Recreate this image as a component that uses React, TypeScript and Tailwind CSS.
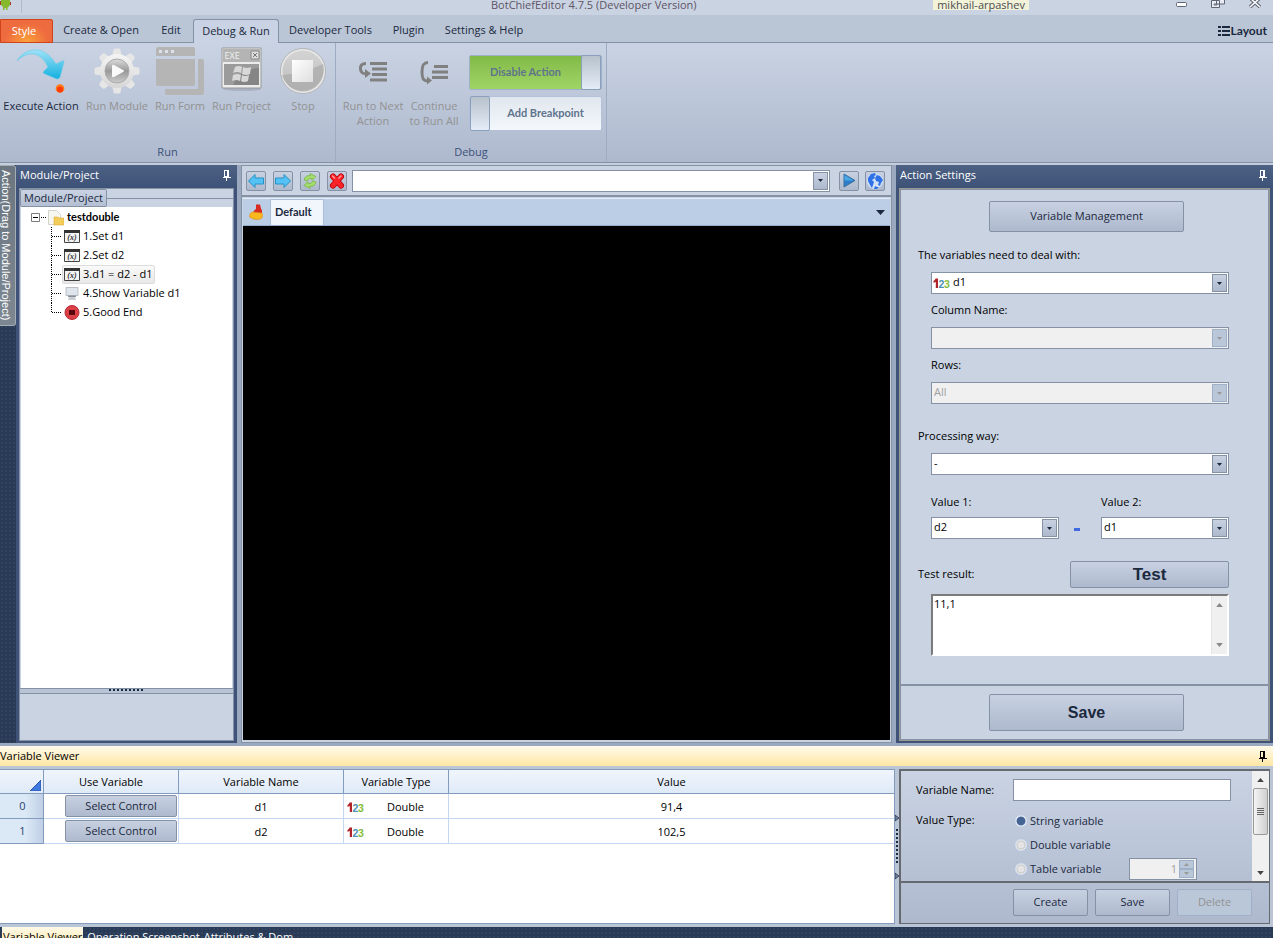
import type { ReactNode } from "react";

const raised =
  "rounded-[2px] border border-[#8591a5] bg-gradient-to-b from-[#c7d1e1] to-[#aeb9ce] text-[#1b293e]";

function Pin() {
  return (
    <svg width="9" height="11" viewBox="0 0 9 11" fill="none" stroke="currentColor" shapeRendering="crispEdges">
      <path d="M2.5 0.5h4v6h-4zM5.5 0.5v6M0.5 7h8M4.5 7v4" />
    </svg>
  );
}

function Arrow({ up = false, wide = false }: { up?: boolean; wide?: boolean }) {
  return (
    <svg width={wide ? 7 : 5} height={wide ? 4 : 3} viewBox="0 0 5 3" fill="currentColor">
      <path d={up ? "M0 3h5L2.5 0z" : "M0 0h5L2.5 3z"} />
    </svg>
  );
}

function Numbers() {
  return (
    <svg width="17" height="12" viewBox="0 0 17 12" fontFamily="Liberation Sans, sans-serif" fontWeight="bold">
      <path d="M2.600 1.500H5V11H2.800V4.800Q1.800 5.600.5 5.800V4Q2 3.400 2.600 1.500z" fill="#b02328" />
      <text x="5.500" y="11" fontSize="10.500" fill="#4d8fb5">2</text>
      <text x="11" y="11" fontSize="10.500" fill="#86bb3c">3</text>
    </svg>
  );
}

function Combo({
  id,
  value,
  disabled = false,
  icon,
  label,
}: {
  id: string;
  value: string;
  disabled?: boolean;
  icon?: ReactNode;
  label?: string;
}) {
  return (
    <div className="relative w-full">
      <select
        id={id}
        aria-label={label}
        disabled={disabled}
        defaultValue={value}
        className={`block h-[22px] w-full appearance-none border border-[#8591a5] pb-[2px] text-[11px] leading-4 outline-none ${
          icon ? "pl-[21px]" : "pl-[2px]"
        } ${disabled ? "bg-[#f0f0f0] text-[#a0a0a0] opacity-100" : "bg-white text-black"}`}
      >
        <option value={value}>{value}</option>
      </select>
      {icon && <span className="pointer-events-none absolute top-[5px] left-[2px]">{icon}</span>}
      <span
        className={`pointer-events-none absolute top-[2px] right-[2px] flex h-[18px] w-[15px] items-center justify-center border ${
          disabled
            ? "border-[#9fb0c9] bg-[#bac7d8] text-[#999]"
            : "border-[#8591a5] bg-gradient-to-b from-[#c7d1e1] to-[#aeb9ce] text-[#1b293e]"
        }`}
      >
        <Arrow />
      </span>
    </div>
  );
}

function ExecuteIcon() {
  return (
    <svg width="48" height="46" viewBox="0 0 48 46">
      <defs>
        <linearGradient id="ex" x1="0" y1="0" x2="0" y2="1">
          <stop offset="0" stopColor="#9fe2f7" />
          <stop offset="1" stopColor="#12b0e0" />
        </linearGradient>
      </defs>
      <path
        d="M0 13C5 4 14 1 22 2c8 2 13 8 17 14l6-3q2-1 2 1l-4 15q-1 2-3 2l-12-5q-3-1-1-3l4-4C27 10 20 5 13 6 8 6.500 4 9 0 13z"
        fill="url(#ex)"
        stroke="#5cc8e8"
        strokeWidth="0.500"
      />
      <circle cx="43" cy="40.500" r="4.300" fill="#ff7a1a" />
      <circle cx="43" cy="41.500" r="3" fill="#ff3c0a" />
    </svg>
  );
}

function GearIcon() {
  const teeth = [0, 45, 90, 135, 180, 225, 270, 315];
  return (
    <svg width="46" height="46" viewBox="0 0 46 46">
      <defs>
        <linearGradient id="ge" x1="0" y1="0" x2="0" y2="1">
          <stop offset="0" stopColor="#f4f4f4" />
          <stop offset="1" stopColor="#d6d6d6" />
        </linearGradient>
        <linearGradient id="gi" x1="0" y1="0" x2="0" y2="1">
          <stop offset="0" stopColor="#ddd" />
          <stop offset="0.500" stopColor="#999" />
          <stop offset="1" stopColor="#ccc" />
        </linearGradient>
      </defs>
      {teeth.map((a) => (
        <path key={a} d="M18 10L19.500 1.500Q20 .5 21 .5h4q1 0 1.500 1L28 10z" fill="#e6e6e6" transform={`rotate(${a} 23 23)`} />
      ))}
      <circle cx="23" cy="23" r="17" fill="url(#ge)" />
      <circle cx="23" cy="23" r="12" fill="url(#gi)" stroke="#aaa" />
      <path d="M18 18q0-2 2-1l9 5q2 1 0 2l-9 5q-2 1-2-1z" fill="#fafafa" />
    </svg>
  );
}

function FormIcon() {
  return (
    <svg width="48" height="48" viewBox="0 0 48 48" fill="#b5b5b5">
      <path d="M2 0h35q2 0 2 2v7H0V2q0-2 2-2z" />
      <path d="M0 12h39v25q0 2-2 2H2q-2 0-2-2z" />
      <path d="M42 12h4q2 0 2 2v32q0 2-2 2H11q-2 0-2-2v-4h33z" />
      <path d="M3 3h3v3H3zM9 3h3v3H9zM15 3h3v3h-3z" fill="#dde2ea" />
    </svg>
  );
}

function ProjectIcon() {
  return (
    <svg width="42" height="48" viewBox="0 0 42 48">
      <ellipse cx="21" cy="42" rx="19" ry="2" fill="#9ba3b3" opacity="0.600" />
      <path d="M1 1h39v40H1z" fill="#ececec" stroke="#999" />
      <path d="M2 2h37v13H2z" fill="#b4b4b4" />
      <path d="M3 17h35v21H3z" fill="#858585" />
      <path d="M3 17h35v4Q20 22 12 38H3z" fill="#9b9b9b" />
      <text x="3.500" y="12" fontSize="9" fill="#f0f0f0" fontFamily="Open Sans, sans-serif">EXE</text>
      <path d="M30 4h8v8h-8z" fill="#ddd" stroke="#888" />
      <path d="M32 6l4 4M36 6l-4 4" stroke="#777" />
      <g fill="#d8d8d8">
        <path d="M14 20q4-2 7 0l-1 6q-4-2-8 0z" />
        <path d="M22 20q4 2 8 0l-1 7q-4 2-8 0z" />
        <path d="M12 28q4-2 8 0l-1 6q-4-2-8 0z" />
        <path d="M21 28q3 2 7 0l-1 6q-4 2-7 0z" />
      </g>
    </svg>
  );
}

function StopIcon() {
  return (
    <svg width="48" height="48" viewBox="0 0 48 48">
      <defs>
        <linearGradient id="st" x1="0" y1="0" x2="0" y2="1">
          <stop offset="0" stopColor="#d4d4d4" />
          <stop offset="1" stopColor="#bdbdbd" />
        </linearGradient>
        <linearGradient id="sq" x1="0" y1="0" x2="1" y2="1">
          <stop offset="0" stopColor="#fff" />
          <stop offset="1" stopColor="#dedede" />
        </linearGradient>
      </defs>
      <circle cx="24" cy="24" r="21.500" fill="url(#st)" stroke="#e9e9e9" strokeWidth="2" />
      <circle cx="24" cy="24" r="22.500" fill="none" stroke="#aaa" strokeWidth="0.800" />
      <path d="M3 28Q24 27 44 17A21 21 0 0 1 3 28z" fill="#a9a9a9" opacity="0.700" />
      <path d="M13 13h21v22H13z" fill="url(#sq)" />
    </svg>
  );
}

function NextIcon({ over = false }: { over?: boolean }) {
  return (
    <svg width="28" height="28" viewBox="0 -4 28 28" fill="none" stroke="#808080">
      {over ? (
        <>
          <path d="M8 1.500C3 1.500 2 5 2 11s1 9 6 9" strokeWidth="3" />
          <path d="M7 15.500v8l5-4z" fill="#808080" stroke="none" />
          <path d="M14 5.500h14M12 11h16M12 16.500h16" strokeWidth="3" />
        </>
      ) : (
        <>
          <path d="M7 2.500Q1 2.500 1.500 8T8 12.500" strokeWidth="3" />
          <path d="M6 8v9l6-4.500z" fill="#808080" stroke="none" />
          <path d="M11 2.500h17M13 8h15M13 13.500h15M11 19h17" strokeWidth="3" />
        </>
      )}
    </svg>
  );
}

function RibbonButton({
  width,
  label,
  disabled = true,
  children,
}: {
  width: string;
  label: string;
  disabled?: boolean;
  children: ReactNode;
}) {
  return (
    <button
      disabled={disabled}
      className={`flex flex-col items-center gap-[2px] text-center leading-[15px] ${width} ${
        disabled ? "text-[#929292]" : "text-[#1b293e]"
      }`}
    >
      <span className="flex h-[50px] items-center">{children}</span>
      <span className="whitespace-pre">{label}</span>
    </button>
  );
}

function VariableIcon() {
  return (
    <svg width="16" height="13" viewBox="0 0 16 13">
      <path d="M.5.5h15v12H.5z" fill="#f4f4f4" stroke="#444" />
      <path d="M0 0h16v3H0z" fill="#333" />
      <text x="8" y="10" fontSize="8" textAnchor="middle" fontStyle="italic" fontWeight="bold" fontFamily="Liberation Serif, serif" fill="#333">(x)</text>
    </svg>
  );
}

function MonitorIcon() {
  return (
    <svg width="16" height="13" viewBox="0 0 16 13">
      <path d="M2 .5h12v8H2z" fill="#dfe5ec" stroke="#b9bec5" />
      <path d="M4 8.500h8v1.500H4z" fill="#8d9299" />
      <path d="M5 10h6l1 3H4z" fill="#c9ccd0" />
    </svg>
  );
}

function EndIcon() {
  return (
    <svg width="16" height="15" viewBox="0 0 16 15">
      <circle cx="8" cy="7.500" r="7" fill="#dc3f48" stroke="#b52a34" />
      <path d="M5 5h6v5H5z" fill="#5a060b" />
    </svg>
  );
}

const steps = [
  { text: "1.Set d1", icon: <VariableIcon /> },
  { text: "2.Set d2", icon: <VariableIcon /> },
  { text: "3.d1 = d2 - d1", icon: <VariableIcon />, selected: true },
  { text: "4.Show Variable d1", icon: <MonitorIcon /> },
  { text: "5.Good End", icon: <EndIcon /> },
];

const rows = [
  { name: "d1", type: "Double", value: "91,4" },
  { name: "d2", type: "Double", value: "102,5" },
];

const tabs = [
  { text: "Create & Open", width: "w-[96px]" },
  { text: "Edit", width: "w-[44px]" },
  { text: "Debug & Run", width: "w-[86px]", active: true },
  { text: "Developer Tools", width: "w-[103px]" },
  { text: "Plugin", width: "w-[53px]" },
  { text: "Settings & Help", width: "w-[98px]" },
];

const darkDots =
  "bg-[#293a56] bg-[radial-gradient(#32435f_1px,transparent_1px)] bg-[length:4px_4px]";

const strong = "font-['Lato','Open_Sans',sans-serif] font-bold";

function TitleBar() {
  return (
    <header className="flex h-[15px] shrink-0 items-start bg-[#c9d3e2] text-[#5f5366]">
      <div className="w-[491px]">
        <svg width="22" height="13" viewBox="0 0 22 13">
          <path d="M1 0h9v5l-1.500 2-1 .5V10H6V8H4.500v2H3V7L1 5z" fill="#85b82c" />
          <path d="M0 1h1v4H0zM10 2h1v3h-1z" fill="#a63a26" />
          <path d="M21.500 0v13" stroke="#b0bccd" />
        </svg>
      </div>
      <h1 className="leading-[10px] whitespace-nowrap">BotChiefEditor 4.7.5 (Developer Version)</h1>
      <div className="ml-auto flex items-start gap-[24px] pr-[12px]">
        <span className="mr-[123px] h-[10px] bg-[#f3f3da] px-[4px] leading-[10px] text-[#4b4b50]">mikhail-arpashev</span>
        <button aria-label="Minimize">
          <svg width="11" height="8" viewBox="0 0 11 8"><rect x="0.500" y="2.500" width="10" height="4" rx="1" fill="#fff" stroke="#5e6576" /></svg>
        </button>
        <button aria-label="Restore">
          <svg width="14" height="8" viewBox="0 0 14 8" fill="#e9edf3" stroke="#5e6576"><path d="M5.500-2h8v6h-8zM.5.5h8v7h-8zM3 4h3v1H3z" /></svg>
        </button>
        <button aria-label="Close">
          <svg width="12" height="8" viewBox="0 0 12 8" fill="none"><path d="M1-2l10 9M11-2L1 7" stroke="#5e6576" strokeWidth="3.500" /><path d="M1-2l10 9M11-2L1 7" stroke="#fff" strokeWidth="1.500" /></svg>
        </button>
      </div>
    </header>
  );
}

function Ribbon() {
  return (
    <>
      <nav className="flex h-[28px] shrink-0 items-end bg-[#bac6d6] text-[#1b293e] shadow-[inset_0_-1px_#8591a5]">
        <button className="h-[24px] w-[53px] rounded-tr-[2px] border border-[#d04218] bg-[radial-gradient(ellipse_at_bottom,#fba23a,#ee6b3f_60%)] pr-[5px] text-white">Style</button>
        {tabs.map((t) => (
          <button
            key={t.text}
            className={`h-[24px] pb-px whitespace-nowrap ${t.width} ${
              t.active ? "rounded-t-[3px] border border-b-0 border-[#8591a5] bg-[#c9d3e3]" : ""
            }`}
          >
            {t.text}
          </button>
        ))}
        <button className={`mr-[6px] ml-auto flex h-[24px] items-center gap-[1px] text-[12px] ${strong}`}>
          <svg width="12" height="10" viewBox="0 0 12 10" fill="currentColor"><path d="M0 0h3v2H0zM4 0h8v2H4zM0 4h3v2H0zM4 4h8v2H4zM0 8h3v2H0zM4 8h8v2H4z" /></svg>
          Layout
        </button>
      </nav>
      <div className="flex h-[120px] shrink-0 border-b border-[#8591a5] bg-gradient-to-b from-[#c9d3e3] to-[#aeb9ce]">
        <section className="flex w-[336px] flex-col justify-between border-r border-[#9dabc3] pt-[3px] pb-[2px]">
          <div className="flex items-start">
            <RibbonButton width="w-[82px]" label="Execute Action" disabled={false}><ExecuteIcon /></RibbonButton>
            <RibbonButton width="w-[70px]" label="Run Module"><GearIcon /></RibbonButton>
            <RibbonButton width="w-[56px]" label="Run Form"><FormIcon /></RibbonButton>
            <RibbonButton width="w-[67px]" label="Run Project"><ProjectIcon /></RibbonButton>
            <RibbonButton width="w-[56px]" label="Stop"><StopIcon /></RibbonButton>
          </div>
          <h2 className="text-center leading-4 text-[#3b5179]">Run</h2>
        </section>
        <section className="flex w-[271px] flex-col justify-between border-r border-[#9dabc3] pt-[3px] pb-[2px]">
          <div className="flex items-start pl-[6px]">
            <RibbonButton width="w-[62px]" label={"Run to Next\nAction"}><NextIcon /></RibbonButton>
            <RibbonButton width="w-[60px]" label={"Continue\nto Run All"}><NextIcon over /></RibbonButton>
            <div className={`flex flex-col gap-[6px] pt-[9px] pl-[5px] text-[#5f738c] ${strong}`}>
              <button role="switch" aria-checked="true" className="flex h-[35px] w-[133px] items-center rounded-[2px] border border-[#9fb0c9] bg-gradient-to-b from-[#82ba48] to-[#9fd565]">
                <span className="flex-1">Disable Action</span>
                <span className="h-[35px] w-[20px] rounded-[2px] border border-[#8ba0bd] bg-gradient-to-b from-[#b8c2cd] to-[#e3ecf7]" />
              </button>
              <button role="switch" aria-checked="false" className="flex h-[35px] w-[133px] items-center rounded-[2px] border border-[#b3c2d8] bg-gradient-to-b from-[#e1e7ee] to-[#f4f8fd]">
                <span className="h-[35px] w-[20px] rounded-[2px] border border-[#8ba0bd] bg-gradient-to-b from-[#b8c2cd] to-[#e3ecf7]" />
                <span className="flex-1">Add Breakpoint</span>
              </button>
            </div>
          </div>
          <h2 className="text-center leading-4 text-[#3b5179]">Debug</h2>
        </section>
      </div>
    </>
  );
}

function ProjectPanel() {
  return (
    <aside className="flex w-[221px] shrink-0 flex-col bg-[#3f5378] px-[3px] pb-[2px]">
      <h2 className="-mx-[3px] flex h-[23px] shrink-0 items-center justify-between bg-gradient-to-b from-[#4d6184] to-[#3d5277] pr-[6px] pb-[2px] pl-[4px] text-white">
        Module/Project <Pin />
      </h2>
      <div className="flex min-h-0 flex-1 flex-col border border-[#8591a5] bg-[#c9d3e2]">
        <div className="flex h-[18px] items-center">
          <button className="h-[18px] rounded-[2px] border border-[#8591a5] bg-gradient-to-b from-[#c9d3e3] to-[#b4bfd3] px-[3px] pb-px text-[#1b293e]">Module/Project</button>
          <span className="h-px flex-1 bg-[#8591a5]" />
        </div>
        <div className="mx-px min-h-0 flex-1 bg-white pt-[1px] text-black">
          <div className={`flex h-[19px] items-center pl-[10px] text-[11px] ${strong}`}>
            <svg width="33" height="17" viewBox="0 0 33 17">
              <path d="M.5 4.500h8v8h-8z" fill="#fff" stroke="#7b7b7b" />
              <path d="M2 8.500h5" stroke="#000" />
              <path d="M10 8.500h5" stroke="#000" strokeDasharray="1 1" />
              <path d="M17.500 1.500h8l4 4v10h-12z" fill="#f7f7f2" stroke="#d4d4cc" />
              <path d="M23 8h4l1 1h5v7H23z" fill="#f2cd5b" stroke="#dcae35" strokeWidth="0.600" />
            </svg>
            <span className="pl-[3px]">testdouble</span>
          </div>
          <ul>
            {steps.map((s, i) => (
              <li key={s.text} className="flex h-[19px] items-center pl-[30px]">
                <svg width="11" height="19" viewBox="0 0 11 19" fill="none" stroke="#000" strokeDasharray="1 1">
                  <path d={i === steps.length - 1 ? "M.5 0v9" : "M.5 0v19"} />
                  <path d="M1 9.500h9" />
                </svg>
                <span
                  className={`flex h-[19px] items-center gap-[3px] border pr-[1px] pl-[1px] ${
                    s.selected ? "rounded-[2px] border-[#dcdcdc] bg-gradient-to-b from-[#fafafa] to-[#e8e8e8]" : "border-transparent"
                  }`}
                >
                  {s.icon}
                  {s.text}
                </span>
              </li>
            ))}
          </ul>
        </div>
        <div className="flex h-[5px] justify-center border-t border-[#8591a5] bg-[#b8c3d5]">
          <svg width="35" height="2" viewBox="0 0 35 2"><path d="M0 1h35" stroke="#1b293e" strokeWidth="2" strokeDasharray="2 2" /></svg>
        </div>
        <div className="h-[47px] border-t border-[#8591a5]" />
      </div>
    </aside>
  );
}

function ToolButton({ label, children }: { label: string; children: ReactNode }) {
  return (
    <button aria-label={label} className={`flex size-[20px] shrink-0 items-center justify-center ${raised}`}>
      <svg width="18" height="18" viewBox="0 0 18 18">{children}</svg>
    </button>
  );
}

function Browser() {
  return (
    <main className="flex min-w-0 flex-1 flex-col border border-[#8591a5] bg-[#c9d3e2]">
      <div className="flex h-[31px] shrink-0 items-center border-b-2 border-[#8591a5] pr-[6px] pl-[4px]">
        <div className="flex gap-[7px] pr-[5px]">
          <ToolButton label="Back"><path d="M1.500 9L8 2.500V6h8.500v6H8v3.500z" fill="#55c2f5" stroke="#2690c4" /></ToolButton>
          <ToolButton label="Forward"><path d="M16.500 9L10 2.500V6H1.500v6H10v3.500z" fill="#55c2f5" stroke="#2690c4" /></ToolButton>
          <ToolButton label="Refresh">
            <path d="M3 8q1-5 6.500-4.500L9 1.500l6 3-4 4V6.500Q7 6 6 9zM15 10q-1 5-6.500 4.500l.5 2-6-3 4-4v2q4 .5 5-2.500z" fill="#a3db6d" stroke="#71b53a" strokeWidth="0.700" />
          </ToolButton>
          <ToolButton label="Stop loading">
            <path d="M5 4.500l8 9M13 4.500l-8 9" stroke="#b80008" strokeWidth="6" strokeLinecap="round" />
            <path d="M5 4.500l8 9M13 4.500l-8 9" stroke="#fb2329" strokeWidth="4.500" strokeLinecap="round" />
            <path d="M4.500 4l2 2M13 4l-2 2" stroke="#ff9b9b" strokeWidth="1.500" strokeLinecap="round" />
          </ToolButton>
        </div>
        <Combo id="address" value="" label="Address" />
        <div className="flex gap-[6px] pl-[9px]">
          <ToolButton label="Go">
            <path d="M4 2l11 6.500L4 15z" fill="#2c7ec8" stroke="#3f6f9c" />
            <path d="M4.500 3l9 5.500H4.500z" fill="#49a8e8" />
          </ToolButton>
          <ToolButton label="Open in browser">
            <circle cx="9" cy="9" r="8" fill="#d2e1f7" />
            <path d="M2 6l3-4 4-1 1 2-2 1 1 2-3 2 2 2-1 3-1 3-2-3-2-4zM11 3l3 1 3 4-2 3-1 3-2-1 1-3-3-1-1-3zM9 14l2 1 2 0-2 2H8z" fill="#2f72e8" />
          </ToolButton>
        </div>
      </div>
      <div className="flex min-h-0 flex-1 flex-col px-px pt-px pb-[2px]">
        <div className="flex h-[28px] shrink-0 items-end border-t border-b border-t-[#e4ecf6] border-b-[#95aed0] bg-[#bccde6] pr-[5px]">
          <button aria-label="Clear" className="flex h-[27px] w-[27px] items-center justify-center pr-[2px]">
            <svg width="14" height="16" viewBox="0 0 14 16">
              <path d="M7 .5h4l1 4 1 2v3l-9-1 2-3 1-.5z" fill="#d92a22" />
              <path d="M3 8l10 1q1 2 0 5l-3 1.500Q4 16 .5 13q0-4 2.500-5z" fill="#f9b81e" stroke="#d98d16" strokeWidth="0.600" />
            </svg>
          </button>
          <button className={`h-[26px] w-[54px] rounded-t-[2px] border border-b-0 border-[#a9bedb] bg-[#f1f6fd] pl-[4px] text-left text-[#1b293e] ${strong}`}>Default</button>
          <button aria-label="Tab list" className="ml-auto flex h-[26px] items-center text-[#1b293e]">
            <svg width="9" height="5" viewBox="0 0 9 5" fill="currentColor"><path d="M0 0h9L4.500 5z" /></svg>
          </button>
        </div>
        <div className="flex-1 bg-black" />
      </div>
    </main>
  );
}

function ActionSettings() {
  return (
    <aside className="flex w-[377px] shrink-0 flex-col bg-[#3f5378] pr-[3px] pb-[2px] pl-[3px]">
      <h2 className="-mx-[3px] flex h-[23px] shrink-0 items-center justify-between bg-gradient-to-b from-[#4d6184] to-[#3d5277] pr-[6px] pb-[2px] pl-[4px] text-white">
        Action Settings <Pin />
      </h2>
      <div className="flex min-h-0 flex-1 flex-col border border-[#9a998f] bg-[#c9d3e2] text-black shadow-[inset_0_0_0_1px_#8591a5]">
        <form className="flex flex-1 flex-col pt-[12px] pr-[40px] pl-[18px]">
          <button type="button" className={`ml-[71px] h-[31px] w-[195px] ${raised}`}>Variable Management</button>
          <label htmlFor="target" className="mt-[15px] leading-4">The variables need to deal with:</label>
          <div className="pl-[13px]">
            <div className="mt-[9px]"><Combo id="target" value="d1" icon={<Numbers />} /></div>
            <label htmlFor="column" className="mt-[8px] block leading-4">Column Name:</label>
            <div className="mt-[9px]"><Combo id="column" value="" disabled /></div>
            <label htmlFor="rows" className="mt-[8px] block leading-4">Rows:</label>
            <div className="mt-[9px]"><Combo id="rows" value="All" disabled /></div>
          </div>
          <label htmlFor="way" className="mt-[24px] leading-4">Processing way:</label>
          <div className="mt-[9px] pl-[13px]"><Combo id="way" value="-" /></div>
          <div className="mt-[19px] flex items-end justify-between pl-[13px]">
            <div className="w-[128px]">
              <label htmlFor="v1" className="mb-[7px] block leading-4">Value 1:</label>
              <Combo id="v1" value="d2" />
            </div>
            <span className="mr-[6px] mb-[8px] h-[3px] w-[6px] bg-[#4169e1]" />
            <div className="w-[128px]">
              <label htmlFor="v2" className="mb-[7px] block leading-4">Value 2:</label>
              <Combo id="v2" value="d1" />
            </div>
          </div>
          <div className="mt-[22px] flex items-center justify-between">
            <label htmlFor="result">Test result:</label>
            <button type="button" className={`h-[27px] w-[159px] font-['Liberation_Sans',sans-serif] text-[17px] font-bold ${raised}`}>Test</button>
          </div>
          <div className="mt-[6px] ml-[13px] flex h-[62px] border-2 border-t-[#7b7b7b] border-r-white border-b-white border-l-[#7b7b7b] bg-white">
            <textarea id="result" defaultValue="11,1" className="min-w-0 flex-1 resize-none pl-px text-[11px] leading-[16px] outline-none" />
            <div className="flex w-[16px] flex-col items-center justify-between border-l border-[#e3e3e3] bg-[#f0f0f0] py-[7px] text-[#888]">
              <Arrow up wide />
              <Arrow wide />
            </div>
          </div>
        </form>
        <div className="h-[56px] shrink-0 border-t-2 border-[#8591a5] pt-[8px] pl-[89px]">
          <button className={`h-[37px] w-[195px] font-['Liberation_Sans',sans-serif] text-[16px] font-bold ${raised}`}>Save</button>
        </div>
      </div>
    </aside>
  );
}

function VariableTable() {
  const head = "border-r border-b border-[#839bbd] bg-gradient-to-b from-[#f0f5fc] to-[#dfeaf8] font-normal";
  const cell = "border-r border-b border-[#c4d7f4]";
  return (
    <div className="min-w-0 flex-1 border-y border-r border-[#839bbd] bg-white text-[11px] text-black">
      <table className="w-full table-fixed border-separate border-spacing-0 text-center">
        <colgroup>
          <col className="w-[44px]" />
          <col className="w-[135px]" />
          <col className="w-[165px]" />
          <col className="w-[105px]" />
          <col />
        </colgroup>
        <thead>
          <tr className="h-[24px]">
            <th aria-label="Row" className={head}>
              <svg width="11" height="11" viewBox="0 0 11 11" className="mt-[8px] mr-[2px] ml-auto"><path d="M11 0v11H0z" fill="#3f78e0" stroke="#2b56ad" /></svg>
            </th>
            <th className={`${head} pt-px`}>Use Variable</th>
            <th className={`${head} pt-px`}>Variable Name</th>
            <th className={`${head} pt-px`}>Variable Type</th>
            <th className={`${head} border-r-0 pt-px`}>Value</th>
          </tr>
        </thead>
        <tbody>
          {rows.map((r, i) => (
            <tr key={r.name} className="h-[25px]">
              <th className="border-r border-b border-[#839bbd] bg-gradient-to-r from-[#dbe8f5] from-60% to-[#bfcfe6] pt-px pl-[2px] font-normal text-[#26436e]">{i}</th>
              <td className={`${cell} pr-[1px]`}>
                <button className={`ml-auto block h-[22px] w-[112px] ${raised}`}>Select Control</button>
              </td>
              <td className={`${cell} pt-[2px]`}>{r.name}</td>
              <td className={`${cell} pt-[2px]`}>
                <div className="flex items-center pl-[3px]">
                  <Numbers />
                  <span className="flex-1 pr-[1px]">{r.type}</span>
                </div>
              </td>
              <td className={`${cell} border-r-0 pt-[2px]`}>{r.value}</td>
            </tr>
          ))}
        </tbody>
      </table>
    </div>
  );
}

function Radio({ label, checked = false }: { label: string; checked?: boolean }) {
  return (
    <label className="flex h-[24px] items-center gap-[3px] text-[#1b293e]">
      <input
        type="radio"
        name="kind"
        defaultChecked={checked}
        className="size-[12px] appearance-none rounded-full border border-[#d3dff0] bg-[radial-gradient(circle,#e4e4e4_3px,#c4c4c4_4px,#f2f2f2_5px)] checked:bg-[radial-gradient(circle,#456394_3px,#456394_4px,#fff_5px)]"
      />
      {label}
    </label>
  );
}

function VariableForm() {
  return (
    <form className="flex w-[371px] shrink-0 flex-col border-2 border-r border-b border-[#666a70] bg-gradient-to-b from-[#c9d3e3] to-[#aeb9ce] text-black">
      <div className="flex h-[110px] shrink-0">
        <div className="flex-1 pt-[8px] pl-[15px]">
          <div className="flex items-center">
            <label htmlFor="varname" className="w-[97px]">Variable Name:</label>
            <input id="varname" className="h-[22px] w-[218px] border border-[#8591a5] bg-white px-[3px] outline-none" />
          </div>
          <fieldset className="mt-[8px] flex">
            <legend className="float-left w-[99px] leading-[22px]">Value Type:</legend>
            <div>
              <Radio label="String variable" checked />
              <Radio label="Double variable" />
              <div className="flex items-center">
                <div className="w-[114px]"><Radio label="Table variable" /></div>
                <div className="flex h-[22px] w-[68px] items-center border border-[#8591a5] bg-[#f0f0f0] pr-[2px]">
                  <input aria-label="Columns" disabled defaultValue="1" className="min-w-0 flex-1 pr-[2px] text-right text-[11px] text-[#a0a0a0]" />
                  <span className="flex w-[15px] flex-col text-[#999]">
                    <button type="button" disabled aria-label="Increase" className="flex h-[9px] items-center justify-center border border-[#9fb0c9] bg-[#bac7d8]"><Arrow up /></button>
                    <button type="button" disabled aria-label="Decrease" className="flex h-[9px] items-center justify-center border border-[#9fb0c9] bg-[#bac7d8]"><Arrow /></button>
                  </span>
                </div>
              </div>
            </div>
          </fieldset>
        </div>
        <div className="flex w-[17px] flex-col items-center bg-[#f0f0f0] text-[#444]">
          <span className="flex h-[17px] items-center"><Arrow up wide /></span>
          <span className="flex h-[47px] w-[15px] items-center justify-center rounded-[2px] border border-[#999] bg-gradient-to-r from-[#f4f4f4] to-[#cfcfcf]">
            <svg width="7" height="8" viewBox="0 0 7 8"><path d="M0 .5h7M0 2.500h7M0 4.500h7M0 6.500h7" stroke="#666" /></svg>
          </span>
          <span className="mt-auto flex h-[17px] items-center"><Arrow wide /></span>
        </div>
      </div>
      <div className="flex flex-1 items-center justify-end gap-[7px] border-t-2 border-[#666a70] pr-[17px] pb-px">
        <button type="button" className={`h-[27px] w-[75px] ${raised}`}>Create</button>
        <button type="button" className={`h-[27px] w-[75px] ${raised}`}>Save</button>
        <button type="button" disabled className="h-[27px] w-[75px] rounded-[2px] border border-[#9fb0c9] bg-[#bac7d8] text-[#929292]">Delete</button>
      </div>
    </form>
  );
}

export default function App() {
  return (
    <div className="flex h-screen flex-col overflow-hidden bg-[#9ba9c0] font-['Open_Sans','Noto_Sans',sans-serif] text-[11px]">
      <TitleBar />
      <Ribbon />
      <div className="h-[2px] shrink-0 bg-[#c4cedd]" />
      <div className="flex min-h-0 flex-1">
        <div className={`w-[16px] shrink-0 ${darkDots}`}>
          <button className="flex h-[161px] w-[16px] items-center justify-center rounded-r-[3px] border border-l-0 border-[#a5adb5] bg-gradient-to-b from-[#6b7681] to-[#7c8791] pr-[4px] font-['Liberation_Sans',sans-serif] text-white [writing-mode:vertical-rl]">
            <span className="whitespace-nowrap">Action(Drag to Module/Project)</span>
          </button>
        </div>
        <ProjectPanel />
        <div className="w-[4px] shrink-0" />
        <Browser />
        <div className="w-[4px] shrink-0" />
        <ActionSettings />
      </div>
      <h2 className="mt-[3px] flex h-[20px] shrink-0 items-center justify-between bg-gradient-to-b from-[#fffaea] to-[#ffe7a3] pr-[6px] text-black">
        Variable Viewer <Pin />
      </h2>
      <div className="flex h-[161px] shrink-0 bg-[#bac6d6] pt-[3px] pr-[3px] pb-[3px]">
        <VariableTable />
        <div className="flex w-[4px] items-center text-[#1b293e]">
          <svg width="4" height="66" viewBox="0 0 4 66">
            <path d="M0 1l4 3-4 3zM0 59l4 3-4 3z" fill="#6d7f9b" stroke="currentColor" strokeWidth="0.700" />
            <path d="M2 15v36" stroke="currentColor" strokeWidth="2" strokeDasharray="2 2" />
          </svg>
        </div>
        <VariableForm />
      </div>
      <footer className={`flex h-[11px] shrink-0 items-start overflow-hidden pl-[2px] text-white ${darkDots}`}>
        <button className="bg-gradient-to-b from-[#fffaea] to-[#ffe7a3] px-px pt-[2px] whitespace-nowrap text-black">Variable Viewer</button>
        <button className="px-[4px] pt-[2px] whitespace-nowrap">Operation Screenshot</button>
        <button className="pt-[2px] whitespace-nowrap">Attributes &amp; Dom</button>
      </footer>
    </div>
  );
}
